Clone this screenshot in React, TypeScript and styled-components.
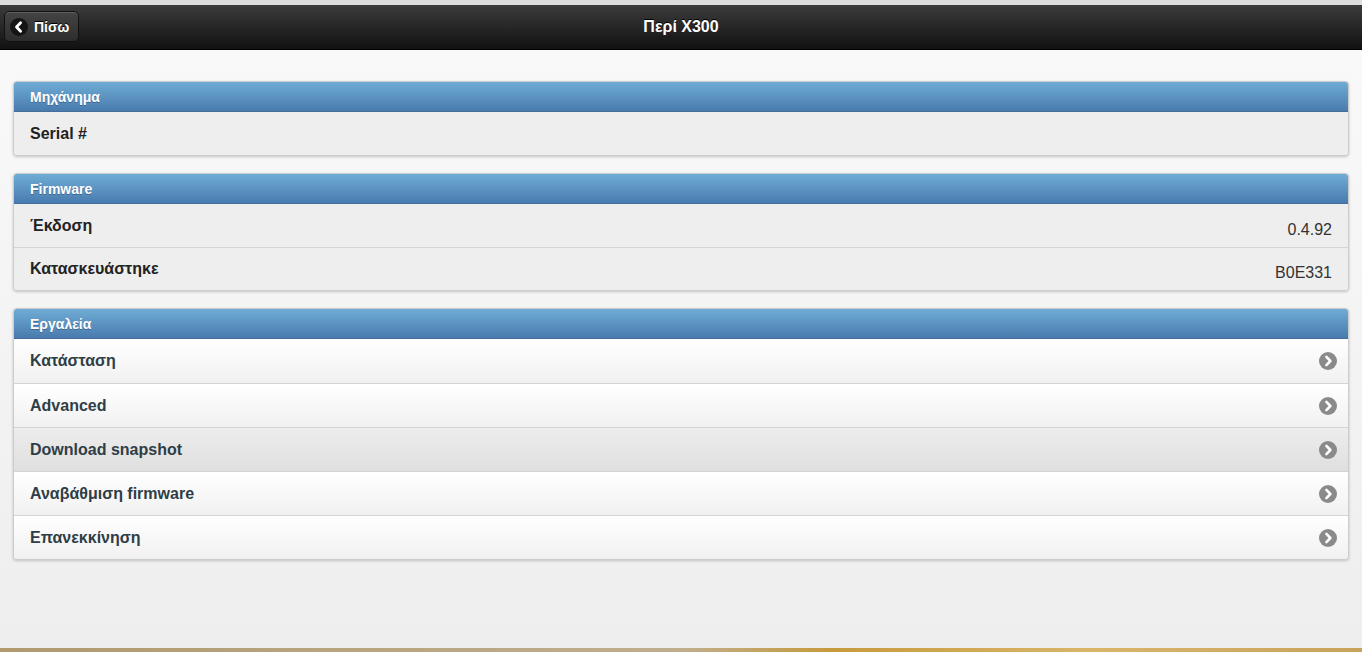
import styled, { createGlobalStyle } from "styled-components";

const GlobalStyle = createGlobalStyle`
  html, body {
    margin: 0;
    padding: 0;
    height: 100%;
  }
  body {
    font-family: "Liberation Sans", Arial, sans-serif;
    background: #eeeeee;
  }
`;

const Page = styled.div`
  display: flex;
  flex-direction: column;
  height: 100vh;
  overflow: hidden;
`;

const TopStrip = styled.div`
  height: 5px;
  background: #dedede;
  flex-shrink: 0;
`;

const Header = styled.header`
  position: relative;
  height: 44px;
  flex-shrink: 0;
  display: flex;
  align-items: center;
  justify-content: center;
  background: linear-gradient(#3c3c3c, #111111);
  border-bottom: 1px solid #000;
`;

const Title = styled.h1`
  margin: 0;
  font-size: 16px;
  font-weight: bold;
  color: #fff;
  text-shadow: 0 -1px 0 #000;
`;

const BackButton = styled.button`
  position: absolute;
  left: 4px;
  top: 6px;
  height: 31px;
  width: 75px;
  display: flex;
  align-items: center;
  gap: 6px;
  padding: 0 0 0 5px;
  border: 1px solid #111;
  border-radius: 5px;
  background: linear-gradient(#444444, #2d2d2d);
  box-shadow: inset 0 1px 0 rgba(255, 255, 255, 0.15);
  color: #fff;
  font-family: inherit;
  font-size: 14px;
  font-weight: bold;
  text-shadow: 0 -1px 0 #000;
  cursor: pointer;
`;

const Content = styled.main`
  flex: 1;
  display: flex;
  flex-direction: column;
  gap: 17px;
  padding: 31px 13px 0;
  background: linear-gradient(#f9f9f9, #eeeeee);
`;

const Panel = styled.section`
  border: 1px solid #cccccc;
  border-radius: 4px;
  overflow: hidden;
  box-shadow: 0 1px 3px rgba(0, 0, 0, 0.2);
  background: #eeeeee;
`;

const PanelHeader = styled.div`
  height: 29px;
  display: flex;
  align-items: center;
  padding: 0 16px;
  background: linear-gradient(#6facd5, #497bae);
  border-bottom: 1px solid #456f9a;
  color: #fff;
  font-size: 14px;
  font-weight: bold;
  text-shadow: 0 1px 0 #3e6790;
`;

const Row = styled.div<{ $link?: boolean; $active?: boolean }>`
  height: ${(p) => (p.$link ? "44px" : "43px")};
  box-sizing: border-box;
  display: flex;
  align-items: center;
  justify-content: space-between;
  padding: 0 11px 0 16px;
  & + & {
    border-top: 1px solid #d4d4d4;
  }
  background: ${(p) =>
    p.$active
      ? "linear-gradient(#ededed, #dfdfdf)"
      : p.$link
      ? "linear-gradient(#ffffff, #f1f1f1)"
      : "#eeeeee"};
  cursor: ${(p) => (p.$link ? "pointer" : "default")};
`;

const Label = styled.span<{ $link?: boolean }>`
  font-size: 16px;
  font-weight: bold;
  color: ${(p) => (p.$link ? "#2f3e46" : "#222")};
`;

const Value = styled.span`
  font-size: 16px;
  color: #333;
  margin-top: 8px;
  margin-right: 5px;
`;

const BottomStrip = styled.div`
  height: 4px;
  flex-shrink: 0;
  background: linear-gradient(
    to right,
    #b09a6e 0%,
    #bfae8e 50%,
    #c79a3c 61%,
    #d9b56a 80%,
    #c9a25a 100%
  );
`;

const BackIcon = () => (
  <svg width="18" height="18" viewBox="0 0 18 18">
    <circle cx="9" cy="9" r="9" fill="#141414" />
    <path
      d="M10.6 4.8 L6.5 9 L10.6 13.2"
      fill="none"
      stroke="#fff"
      strokeWidth="2.8"
      strokeLinecap="round"
      strokeLinejoin="round"
    />
  </svg>
);

const ArrowIcon = () => (
  <svg width="18" height="18" viewBox="0 0 18 18">
    <circle cx="9" cy="9" r="9" fill="#8a8a8a" />
    <path
      d="M7.4 4.9 L11.4 9 L7.4 13.1"
      fill="none"
      stroke="#fff"
      strokeWidth="2.6"
      strokeLinecap="round"
      strokeLinejoin="round"
    />
  </svg>
);

const tools = [
  "Κατάσταση",
  "Advanced",
  "Download snapshot",
  "Αναβάθμιση firmware",
  "Επανεκκίνηση",
];

export default function App() {
  return (
    <Page>
      <GlobalStyle />
      <TopStrip />
      <Header>
        <BackButton>
          <BackIcon />
          Πίσω
        </BackButton>
        <Title>Περί X300</Title>
      </Header>
      <Content>
        <Panel>
          <PanelHeader>Μηχάνημα</PanelHeader>
          <Row>
            <Label>Serial #</Label>
          </Row>
        </Panel>
        <Panel>
          <PanelHeader>Firmware</PanelHeader>
          <Row>
            <Label>Έκδοση</Label>
            <Value>0.4.92</Value>
          </Row>
          <Row>
            <Label>Κατασκευάστηκε</Label>
            <Value>B0E331</Value>
          </Row>
        </Panel>
        <Panel>
          <PanelHeader>Εργαλεία</PanelHeader>
          {tools.map((t, i) => (
            <Row key={t} $link $active={i === 2}>
              <Label $link>{t}</Label>
              <ArrowIcon />
            </Row>
          ))}
        </Panel>
      </Content>
      <BottomStrip />
    </Page>
  );
}
